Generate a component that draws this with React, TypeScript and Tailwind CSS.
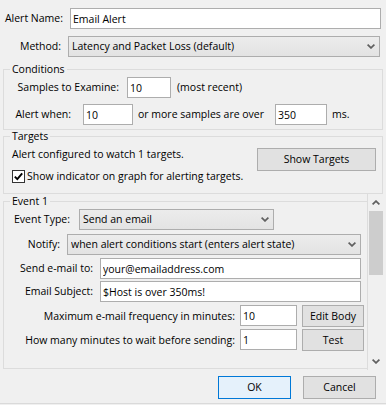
import React from "react";

function Chevron({ up = false }: { up?: boolean }) {
  return (
    <svg width="8" height="5" viewBox="0 0 8 5" className="shrink-0">
      <path
        d={up ? "M0.6 4.4 L4 1.1 L7.4 4.4" : "M0.6 0.6 L4 3.9 L7.4 0.6"}
        stroke="#606060"
        strokeWidth="1.7"
        fill="none"
      />
    </svg>
  );
}

function Select({ value, className }: { value: string; className: string }) {
  return (
    <div
      className={`flex items-center h-[21px] border border-[#adadad] bg-gradient-to-b from-[#ececec] to-[#e3e3e3] pl-[3px] pr-[4px] ${className}`}
    >
      <span className="flex-1 truncate">{value}</span>
      <Chevron />
    </div>
  );
}

function TextBox({ value, className }: { value: string; className: string }) {
  return (
    <input
      readOnly
      defaultValue={value}
      className={`h-[21px] border border-[#adadad] bg-white px-[2px] outline-none ${className}`}
    />
  );
}

function Button({ label, className }: { label: string; className: string }) {
  return (
    <button
      className={`flex items-center justify-center border border-[#adadad] bg-[#e1e1e1] ${className}`}
    >
      {label}
    </button>
  );
}

export default function App() {
  return (
    <div className="w-[386px] h-[405px] bg-[#f0f0f0] text-[10.5px] leading-[13px] text-black font-['Open_Sans',sans-serif] overflow-hidden flex flex-col">
      <div className="flex items-center mt-[8px] h-[21px] shrink-0">
        <span className="w-[63px] text-right whitespace-nowrap">Alert Name:</span>
        <TextBox value="Email Alert" className="ml-[7px] w-[311px]" />
      </div>
      <div className="flex items-center mt-[7px] h-[21px] shrink-0">
        <span className="w-[61px] text-right">Method:</span>
        <Select value="Latency and Packet Loss (default)" className="ml-[7px] w-[312px]" />
      </div>

      <fieldset className="mt-[6px] ml-[3px] w-[380px] border border-[#dcdcdc] pt-[1px] pb-[4px] shrink-0">
        <legend className="ml-[6px] px-[2px] leading-[13px]">Conditions</legend>
        <div className="flex items-center h-[21px]">
          <span className="w-[115px] text-right whitespace-nowrap">Samples to Examine:</span>
          <TextBox value="10" className="ml-[8px] w-[44px]" />
          <span className="ml-[6px]">(most recent)</span>
        </div>
        <div className="flex items-center h-[21px] mt-[6px]">
          <span className="w-[67px] text-right whitespace-nowrap">Alert when:</span>
          <TextBox value="10" className="ml-[12px] w-[50px]" />
          <span className="ml-[5px] w-[137px] whitespace-nowrap">or more samples are over</span>
          <TextBox value="350" className="w-[52px]" />
          <span className="ml-[5px]">ms.</span>
        </div>
      </fieldset>

      <fieldset className="ml-[3px] w-[380px] border border-[#dcdcdc] pb-[10px] shrink-0">
        <legend className="ml-[6px] px-[2px] leading-[13px]">Targets</legend>
        <div className="flex justify-between items-start">
          <div className="flex flex-col pl-[8px]">
            <div className="mt-[5px] h-[13px] whitespace-nowrap">Alert configured to watch 1 targets.</div>
            <div className="mt-[9px] flex items-center h-[13px]">
              <span className="w-[13px] h-[13px] border border-[#333333] bg-white flex items-center justify-center">
                <svg width="11" height="11" viewBox="0 0 11 11">
                  <path d="M1.8 5.6 L4.3 8.2 L9.2 2.4" stroke="#000" strokeWidth="1.9" fill="none" />
                </svg>
              </span>
              <span className="ml-[2px] whitespace-nowrap">Show indicator on graph for alerting targets.</span>
            </div>
          </div>
          <Button label="Show Targets" className="mt-[5px] mr-[6px] w-[119px] h-[23px]" />
        </div>
      </fieldset>

      <div className="ml-[3px] w-[381px] h-[176px] flex shrink-0">
        <div className="w-[364px] h-full overflow-hidden">
          <fieldset className="mt-[1px] w-[364px] h-[174px] border border-r-0 border-[#dcdcdc] pt-[1px]">
            <legend className="ml-[6px] px-[2px] leading-[13px]">Event 1</legend>
            <div className="flex items-center h-[21px]">
              <span className="w-[66px] text-right whitespace-nowrap">Event Type:</span>
              <Select value="Send an email" className="ml-[9px] w-[195px]" />
            </div>
            <div className="flex items-center h-[21px] mt-[4px]">
              <span className="w-[56px] text-right">Notify:</span>
              <Select value="when alert conditions start (enters alert state)" className="ml-[7px] w-[294px]" />
            </div>
            <div className="flex items-center h-[21px] mt-[3px]">
              <span className="w-[89px] text-right whitespace-nowrap">Send e-mail to:</span>
              <TextBox value="your@emailaddress.com" className="ml-[7px] w-[261px]" />
            </div>
            <div className="flex items-center h-[21px] mt-[2px]">
              <span className="w-[89px] text-right whitespace-nowrap">Email Subject:</span>
              <TextBox value="$Host is over 350ms!" className="ml-[7px] w-[261px]" />
            </div>
            <div className="flex items-center h-[22px] mt-[3px]">
              <span className="w-[231px] text-right whitespace-nowrap">Maximum e-mail frequency in minutes:</span>
              <TextBox value="10" className="ml-[5px] w-[57px] self-start" />
              <Button label="Edit Body" className="ml-[5px] w-[62px] h-[22px]" />
            </div>
            <div className="flex items-center h-[22px] mt-[2px]">
              <span className="w-[231px] text-right whitespace-nowrap">How many minutes to wait before sending:</span>
              <TextBox value="1" className="ml-[5px] w-[57px] self-start" />
              <Button label="Test" className="ml-[5px] w-[62px] h-[22px]" />
            </div>
          </fieldset>
        </div>
        <div className="w-[17px] h-full border-l border-[#dcdcdc] bg-[#f0f0f0] flex flex-col">
          <div className="h-[17px] flex items-center justify-center shrink-0">
            <Chevron up />
          </div>
          <div className="h-[64px] mx-[1px] bg-[#cdcdcd] shrink-0" />
          <div className="flex-1" />
          <div className="h-[17px] flex items-center justify-center shrink-0">
            <Chevron />
          </div>
        </div>
      </div>

      <div className="flex justify-end mt-[6px] pr-[10px] gap-[12px] shrink-0">
        <button className="w-[73px] h-[23px] border border-[#0078d7] bg-[#e5f1fb] flex items-center justify-center">
          OK
        </button>
        <Button label="Cancel" className="w-[73px] h-[23px]" />
      </div>
      <div className="mt-auto mb-[1px] h-[1px] bg-[#dadada] shrink-0" />
    </div>
  );
}
